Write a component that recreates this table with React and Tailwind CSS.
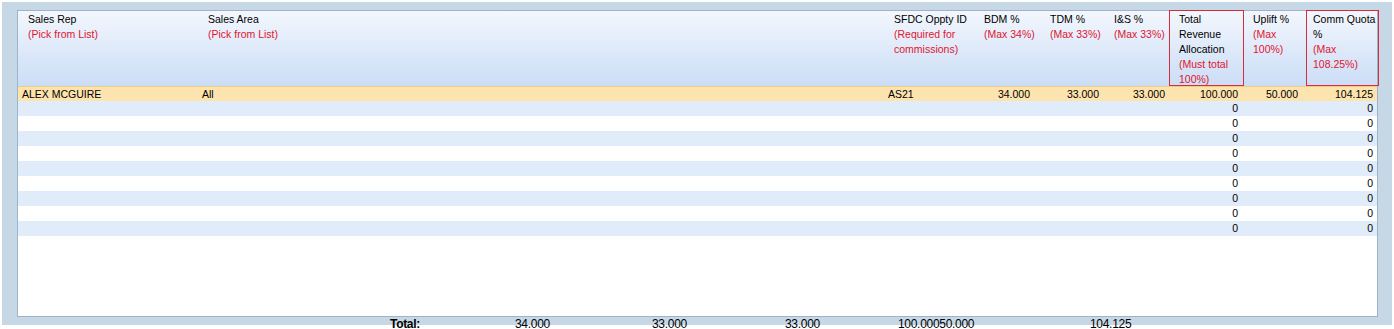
import React from 'react';

const cols = [
  { key: 'rep', w: 180, head: ['Sales Rep'], note: ['(Pick from List)'], align: 'left', pad: 'pl-[4px]', hpad: 'pl-[10px]' },
  { key: 'area', w: 686, head: ['Sales Area'], note: ['(Pick from List)'], align: 'left', pad: 'pl-[4px]', hpad: 'pl-[10px]' },
  { key: 'sfdc', w: 90, head: ['SFDC Oppty ID'], note: ['(Required for', 'commissions)'], align: 'left', pad: 'pl-[4px]', hpad: 'pl-[10px]' },
  { key: 'bdm', w: 67, head: ['BDM %'], note: ['(Max 34%)'], align: 'right', pad: 'pr-[11px]', hpad: 'pl-[10px]' },
  { key: 'tdm', w: 64, head: ['TDM %'], note: ['(Max 33%)'], align: 'right', pad: 'pr-[6px]', hpad: 'pl-[9px]' },
  { key: 'ins', w: 64, head: ['I&S %'], note: ['(Max 33%)'], align: 'right', pad: 'pr-[4px]', hpad: 'pl-[9px]' },
  { key: 'total', w: 75, head: ['Total', 'Revenue', 'Allocation'], note: ['(Must total', '100%)'], align: 'right', pad: 'pr-[6px]', hpad: 'pl-[9px]', boxed: true },
  { key: 'uplift', w: 62, head: ['Uplift %'], note: ['(Max', '100%)'], align: 'right', pad: 'pr-[8px]', hpad: 'pl-[9px]' },
  { key: 'comm', w: 73, head: ['Comm Quota', '%'], note: ['(Max', '108.25%)'], align: 'right', pad: 'pr-[6px]', hpad: 'pl-[6px]', boxed: true },
];

const first = {
  rep: 'ALEX MCGUIRE', area: 'All', sfdc: 'AS21', bdm: '34.000', tdm: '33.000',
  ins: '33.000', total: '100.000', uplift: '50.000', comm: '104.125',
};

const emptyRows = Array.from({ length: 9 }, () => ({ total: '0', comm: '0' }));

function Row({ data, className }) {
  return (
    <div className={`flex h-[15px] leading-[15px] ${className}`}>
      {cols.map((c) => (
        <div
          key={c.key}
          style={{ width: c.w }}
          className={`shrink-0 whitespace-nowrap overflow-hidden ${c.pad} ${c.align === 'right' ? 'text-right' : 'text-left'}`}
        >
          {data[c.key] || ''}
        </div>
      ))}
    </div>
  );
}

export default function App() {
  return (
    <div className="h-[329px] w-[1394px] bg-white overflow-hidden font-['Liberation_Sans',Arial,sans-serif] text-[10.5px] text-black">
      <div className="mx-[2px] mt-[2px] h-[323px] bg-[#c6d7e6] pl-[15px] pr-[14px] pt-[8px]">
        <div className="h-[307px] border border-[#9fb2c6] bg-white">
          {/* header */}
          <div className="flex h-[75px] bg-gradient-to-b from-[#f3f7fd] to-[#cbddf6]">
            {cols.map((c) => (
              <div
                key={c.key}
                style={{ width: c.w }}
                className={`shrink-0 leading-[15px] pt-[1px] ${c.hpad} ${c.boxed ? 'border border-[#d82c3c] -mt-px' : ''}`}
              >
                {c.head.map((t) => (
                  <div key={t} className="whitespace-nowrap">{t}</div>
                ))}
                {c.note.map((t) => (
                  <div key={t} className="whitespace-nowrap text-[#e2142e]">{t}</div>
                ))}
              </div>
            ))}
          </div>

          {/* rows */}
          <Row data={first} className="bg-[#fde3ad] border-t border-[#efcb86] h-[15px]" />
          {emptyRows.map((r, i) => (
            <Row key={i} data={r} className={i % 2 === 0 ? 'bg-[#e1ecfa]' : 'bg-white'} />
          ))}
        </div>

        {/* totals */}
        <div className="flex -ml-[15px] pl-[388px] h-[14px] leading-[14px] text-[12px] tracking-[-0.3px]">
          <div className="w-[125px] shrink-0 font-bold">Total:</div>
          <div className="w-[137px] shrink-0">34.000</div>
          <div className="w-[133px] shrink-0">33.000</div>
          <div className="w-[113px] shrink-0">33.000</div>
          <div className="w-[192px] shrink-0">100.00050.000</div>
          <div className="shrink-0">104.125</div>
        </div>
      </div>
    </div>
  );
}
